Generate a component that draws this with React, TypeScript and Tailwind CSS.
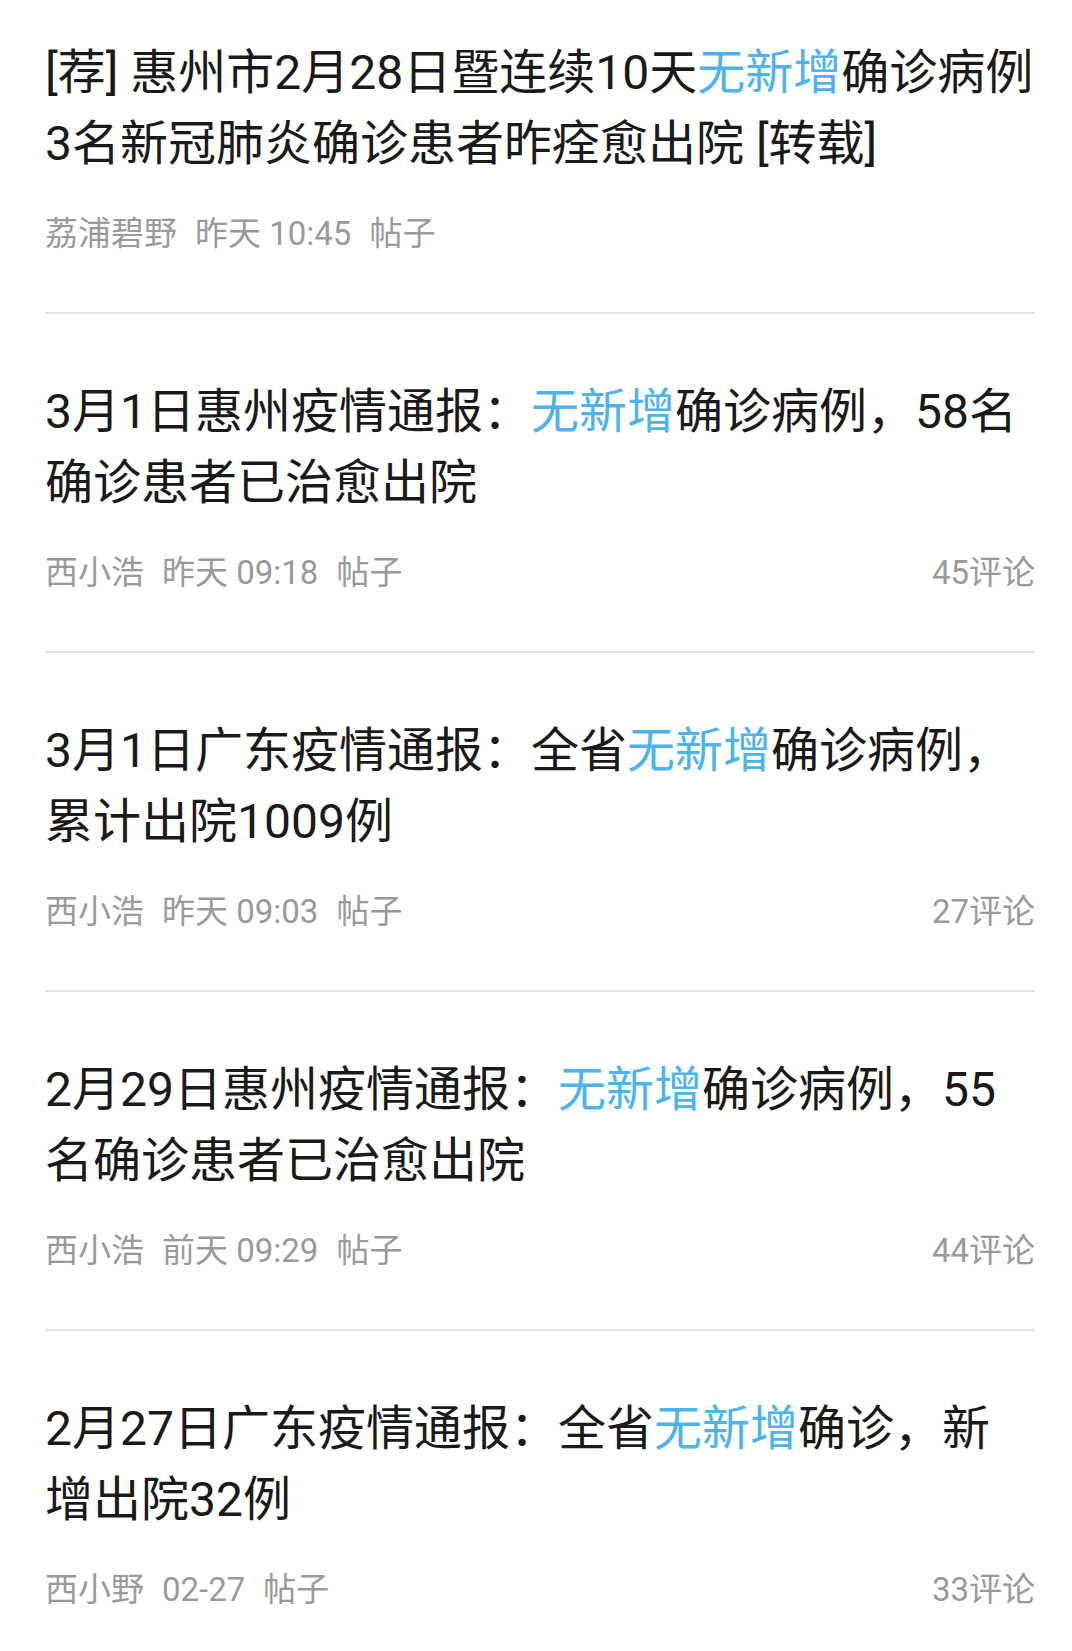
type Post = {
  before: string;
  after: string;
  author: string;
  time: string;
  comments?: string;
};

const posts: Post[] = [
  {
    before: "[荐] 惠州市2月28日暨连续10天",
    after: "确诊病例 3名新冠肺炎确诊患者昨痊愈出院 [转载]",
    author: "荔浦碧野",
    time: "昨天 10:45",
  },
  {
    before: "3月1日惠州疫情通报：",
    after: "确诊病例，58名确诊患者已治愈出院",
    author: "西小浩",
    time: "昨天 09:18",
    comments: "45评论",
  },
  {
    before: "3月1日广东疫情通报：全省",
    after: "确诊病例，累计出院1009例",
    author: "西小浩",
    time: "昨天 09:03",
    comments: "27评论",
  },
  {
    before: "2月29日惠州疫情通报：",
    after: "确诊病例，55名确诊患者已治愈出院",
    author: "西小浩",
    time: "前天 09:29",
    comments: "44评论",
  },
  {
    before: "2月27日广东疫情通报：全省",
    after: "确诊，新增出院32例",
    author: "西小野",
    time: "02-27",
    comments: "33评论",
  },
];

const font = "font-['Roboto','Noto_Sans_CJK_SC',sans-serif]";

function PostRow({ post }: { post: Post }) {
  return (
    <div className="pt-[62px] first:pt-[37px] pb-[58px] border-b-2 border-[#e3e3e3]">
      <h2 className="text-[48px] leading-[71px] text-[#1a1a1a] font-normal">
        {post.before}
        <span className="text-[#4db3ec]">无新增</span>
        {post.after}
      </h2>
      <div className="mt-[35px] flex items-center justify-between text-[33px] leading-[40px] text-[#9a9a9a]">
        <div className="flex gap-[18px]">
          <span>{post.author}</span>
          <span>{post.time}</span>
          <span>帖子</span>
        </div>
        {post.comments && <span>{post.comments}</span>}
      </div>
    </div>
  );
}

export default function App() {
  return (
    <div className={`h-[1651px] overflow-hidden bg-white ${font}`}>
      <div className="pl-[45px] pr-[37px]">
        {posts.map((p) => (
          <PostRow key={p.time + p.author} post={p} />
        ))}
      </div>
    </div>
  );
}
